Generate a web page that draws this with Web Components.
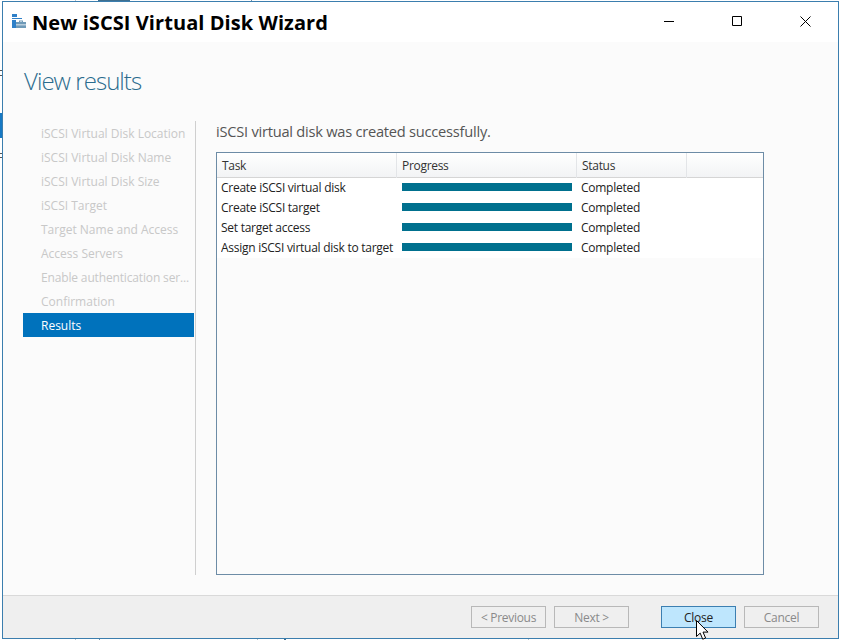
<!DOCTYPE html>
<html>
<head>
<meta charset="utf-8">
<title>New iSCSI Virtual Disk Wizard</title>
<style>
  html, body { margin: 0; height: 100%; background: #ffffff; }
  body { font-family: "Open Sans", "Noto Sans", sans-serif; font-size: 12px; overflow: hidden; position: relative; }
</style>
</head>
<body>
<desktop-slivers></desktop-slivers>
<wizard-window title="New iSCSI Virtual Disk Wizard" heading="View results">
  <wizard-steps slot="steps">
    <wizard-step>iSCSI Virtual Disk Location</wizard-step>
    <wizard-step>iSCSI Virtual Disk Name</wizard-step>
    <wizard-step>iSCSI Virtual Disk Size</wizard-step>
    <wizard-step>iSCSI Target</wizard-step>
    <wizard-step>Target Name and Access</wizard-step>
    <wizard-step>Access Servers</wizard-step>
    <wizard-step style="letter-spacing: -0.15px">Enable authentication ser...</wizard-step>
    <wizard-step>Confirmation</wizard-step>
    <wizard-step selected>Results</wizard-step>
  </wizard-steps>
  <results-panel message="iSCSI virtual disk was created successfully.">
    <task-row task="Create iSCSI virtual disk" status="Completed"></task-row>
    <task-row task="Create iSCSI target" status="Completed"></task-row>
    <task-row task="Set target access" status="Completed"></task-row>
    <task-row task="Assign iSCSI virtual disk to target" status="Completed"></task-row>
  </results-panel>
  <wizard-button slot="buttons" disabled>&lt; Previous</wizard-button>
  <wizard-button slot="buttons" disabled>Next &gt;</wizard-button>
  <wizard-button slot="buttons" hot class="gap">Close</wizard-button>
  <wizard-button slot="buttons" disabled>Cancel</wizard-button>
</wizard-window>

<script>
// bits of the windows behind the wizard, they show only around its edge
class DesktopSlivers extends HTMLElement {
  connectedCallback() {
    this.attachShadow({ mode: "open" });
    this.shadowRoot.innerHTML = `
      <style>
        :host { position: absolute; inset: 0; }
        i { position: absolute; display: block; }
      </style>
      <i style="left:75px;top:0;width:1px;height:1px;background:#b9c4cc"></i>
      <i style="left:98px;top:0;width:32px;height:1px;background:#3f6f8f"></i>
      <i style="left:251px;top:0;width:1px;height:1px;background:#6f93ab"></i>
      <i style="left:75px;top:639px;width:1px;height:1px;background:#b9c4cc"></i>
      <i style="left:99px;top:639px;width:1px;height:1px;background:#6f93ab"></i>
      <i style="left:257px;top:639px;width:1px;height:1px;background:#b9c4cc"></i>
      <i style="left:284px;top:639px;width:2px;height:1px;background:#3f6f8f"></i>
      <i style="left:528px;top:639px;width:1px;height:1px;background:#b9c4cc"></i>
      <i style="left:0;top:70px;width:2px;height:1px;background:#555"></i>
      <i style="left:0;top:75px;width:2px;height:1px;background:#555"></i>
      <i style="left:0;top:113px;width:2px;height:25px;background:#1679c4"></i>
      <i style="left:0;top:153px;width:2px;height:1px;background:#555"></i>
      <i style="left:0;top:157px;width:2px;height:1px;background:#555"></i>
    `;
  }
}

class WizardWindow extends HTMLElement {
  connectedCallback() {
    const style = `
      :host {
        display: flex;
        flex-direction: column;
        box-sizing: border-box;
        width: 837px;
        height: 638px;
        margin: 1px 0 0 2px;
        border: 1px solid #3b7eae;
        background: #fbfbfb;
        color: #000;
        position: relative;
      }
      .titlebar {
        display: flex;
        height: 40px;
        flex: none;
        background: #fff;
        padding-left: 9px;
      }
      .titlebar svg.app { flex: none; margin: 12px 5px 0 0; }
      h1 {
        margin: 0;
        font-size: 20px;
        line-height: 42px;
        font-weight: 700;
        letter-spacing: 0.07px;
        color: #000;
        flex: 1;
      }
      .caption { display: flex; margin-right: -1px; }
      .caption span {
        width: 68px;
        height: 38px;
        display: flex;
        align-items: center;
        justify-content: center;
      }
      h2 {
        margin: 0;
        padding: 23px 0 0 21px;
        height: 56px;
        font-size: 24px;
        line-height: 32px;
        font-weight: 300;
        letter-spacing: -0.95px;
        color: #2b6c8e;
        flex: none;
      }
      .body {
        flex: 1;
        display: flex;
        min-height: 0;
        padding: 0 74px 20px 20px;
      }
      .side {
        width: 172px;
        flex: none;
        border-right: 1px solid #cfcfcf;
      }
      .main { flex: 1; min-width: 0; margin-left: 20px; display: flex; }
      footer {
        flex: none;
        height: 43px;
        box-sizing: border-box;
        border-top: 1px solid #d9d9d9;
        background: #efefef;
        display: flex;
        justify-content: flex-end;
        align-items: flex-start;
        gap: 8px;
        padding: 10px 19px 0 0;
      }
      .cursor { position: absolute; left: 692px; top: 618px; }
    `;

    const html = `
      <div class="titlebar">
        <svg class="app" width="15" height="15" viewBox="0 0 15 15">
          <path fill="#2f80c8" d="M0 0h5v3H0zM0 4h10v1H0zM0 6h4v8H0z"/>
          <path fill="#6f9ab8" d="M4 8h3V6.500h4V8h3v6H4z"/>
          <path fill="#fff" d="M8 7.500h2V8H8zM4 10.500h10v.7H4z"/>
        </svg>
        <h1>${this.getAttribute("title")}</h1>
        <div class="caption">
          <span><svg width="11" height="11" viewBox="0 0 11 11"><path d="M0 5.500h10" stroke="#000" fill="none"/></svg></span>
          <span><svg width="10" height="10" viewBox="0 0 10 10"><path d="M.5.500h9v9h-9z" stroke="#000" fill="none"/></svg></span>
          <span><svg width="11" height="11" viewBox="0 0 11 11"><path d="M.5.500l10 10M10.500.500l-10 10" stroke="#000" fill="none"/></svg></span>
        </div>
      </div>
      <h2>${this.getAttribute("heading")}</h2>
      <div class="body">
        <div class="side"><slot name="steps"></slot></div>
        <div class="main"><slot></slot></div>
      </div>
      <footer><slot name="buttons"></slot></footer>
      <svg class="cursor" width="15" height="21" viewBox="0 0 15 21">
        <path d="M1.500.500v16l3.700-3.400 2.500 6.100 2.900-1.200-2.600-5.900h5z" fill="#fff" stroke="#000" stroke-width="1"/>
      </svg>
    `;

    this.attachShadow({ mode: "open" });
    this.shadowRoot.innerHTML = `<style>${style}</style>${html}`;
  }
}

class WizardSteps extends HTMLElement {
  connectedCallback() {
    this.attachShadow({ mode: "open" });
    this.shadowRoot.innerHTML = `
      <style>
        :host { display: flex; flex-direction: column; }
      </style>
      <slot></slot>
    `;
  }
}

class WizardStep extends HTMLElement {
  connectedCallback() {
    this.attachShadow({ mode: "open" });
    this.shadowRoot.innerHTML = `
      <style>
        :host {
          display: block;
          height: 24px;
          line-height: 26px;
          padding-left: 18px;
          color: #c8c8c8;
          white-space: nowrap;
          overflow: hidden;
          margin-right: 1px;
        }
        :host([selected]) { background: #0072bc; color: #fff; }
      </style>
      <slot></slot>
    `;
  }
}

class ResultsPanel extends HTMLElement {
  connectedCallback() {
    const style = `
      :host { display: flex; flex-direction: column; flex: 1; min-width: 0; }
      p {
        margin: 0;
        height: 31px;
        font-size: 14.67px;
        line-height: 20px;
        color: #555;
        letter-spacing: -0.25px;
        flex: none;
      }
      .grid {
        flex: 1;
        border: 1px solid #6d8ca6;
        display: flex;
        flex-direction: column;
        background: #fbfbfb;
        min-height: 0;
      }
      .head {
        display: grid;
        grid-template-columns: 180px 180px 110px 1fr;
        height: 24px;
        flex: none;
        background: linear-gradient(#ffffff, #f2f3f5);
        border-bottom: 1px solid #d5d5d5;
      }
      .head span {
        padding-left: 5px;
        line-height: 26px;
        border-right: 1px solid #e3e5e8;
        color: #333;
        letter-spacing: -0.3px;
      }
      .head span:last-child { border-right: 0; }
      .rows { background: #fff; }
    `;

    this.attachShadow({ mode: "open" });
    this.shadowRoot.innerHTML = `
      <style>${style}</style>
      <p>${this.getAttribute("message")}</p>
      <div class="grid">
        <div class="head">
          <span>Task</span><span>Progress</span><span>Status</span><span></span>
        </div>
        <div class="rows"><slot></slot></div>
      </div>
    `;
  }
}

class TaskRow extends HTMLElement {
  connectedCallback() {
    this.attachShadow({ mode: "open" });
    this.shadowRoot.innerHTML = `
      <style>
        :host {
          display: grid;
          grid-template-columns: 173px 184px 1fr;
          height: 20px;
          line-height: 20px;
          padding-left: 4px;
          color: #222;
          letter-spacing: -0.26px;
        }
        .task { white-space: nowrap; overflow: hidden; }
        .bar { padding-left: 8px; }
        .bar div { width: 170px; height: 8px; margin-top: 5px; background: #00708e; }
        .status { padding-left: 3px; }
      </style>
      <div class="task">${this.getAttribute("task")}</div>
      <div class="bar"><div></div></div>
      <div class="status">${this.getAttribute("status")}</div>
    `;
  }
}

class WizardButton extends HTMLElement {
  connectedCallback() {
    this.attachShadow({ mode: "open" });
    this.shadowRoot.innerHTML = `
      <style>
        :host {
          display: block;
          box-sizing: border-box;
          width: 75px;
          height: 22px;
          border: 1px solid #adadad;
          line-height: 21px;
          text-align: center;
          color: #222;
          letter-spacing: -0.3px;
        }
        :host([disabled]) { color: #8a8a8a; border-color: #b8b8b8; }
        :host([hot]) { background: #bee6fd; border-color: #3c7fb1; }
        :host(.gap) { margin-left: 24px; }
      </style>
      <slot></slot>
    `;
  }
}

customElements.define("desktop-slivers", DesktopSlivers);
customElements.define("wizard-window", WizardWindow);
customElements.define("wizard-steps", WizardSteps);
customElements.define("wizard-step", WizardStep);
customElements.define("results-panel", ResultsPanel);
customElements.define("task-row", TaskRow);
customElements.define("wizard-button", WizardButton);
</script>
</body>
</html>
